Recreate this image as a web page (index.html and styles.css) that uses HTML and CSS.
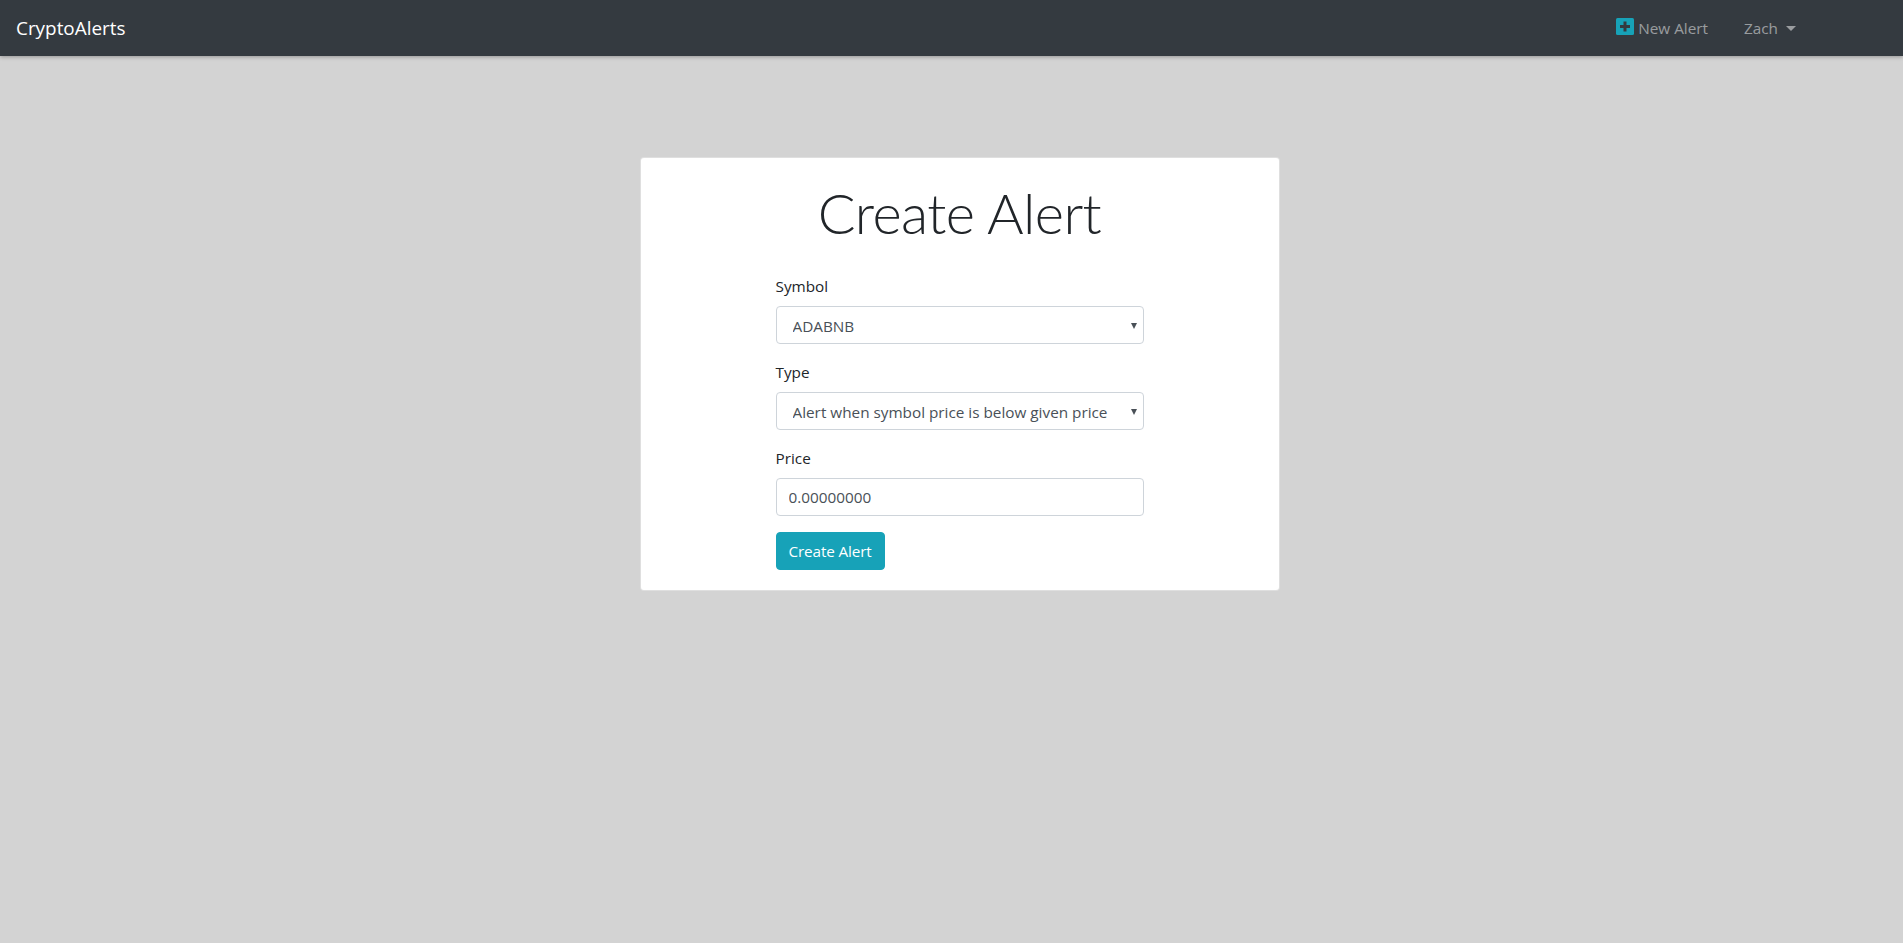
FILE: index.html
```html
<!DOCTYPE html>
<html lang="en">
<head>
    <meta charset="UTF-8">
    <meta name="viewport" content="width=device-width, initial-scale=1.0">
    <title>CryptoAlerts</title>
    <link rel="stylesheet" href="styles.css">
</head>
<body>
    <nav class="navbar">
        <a class="brand" href="#">CryptoAlerts</a>
        <div class="nav-links">
            <a class="nav-link new-alert" href="#">
                <svg class="plus-icon" viewBox="0 0 18 17" width="18" height="17" aria-hidden="true">
                    <rect width="18" height="17" rx="1.5" fill="#17a2b8"/>
                    <path d="M7.5 3.5h3v3.5H14v3h-3.5v3.5h-3V10H4V7h3.5z" fill="#343a40"/>
                </svg>
                New Alert
            </a>
            <a class="nav-link dropdown-toggle" href="#">Zach</a>
        </div>
    </nav>

    <main class="content">
        <div class="card">
            <h1>Create Alert</h1>
            <form class="alert-form">
                <div class="form-group">
                    <label for="symbol">Symbol</label>
                    <div class="select-wrap">
                        <select id="symbol" class="form-control select-control">
                            <option>ADABNB</option>
                        </select>
                    </div>
                </div>
                <div class="form-group">
                    <label for="type">Type</label>
                    <div class="select-wrap">
                        <select id="type" class="form-control select-control">
                            <option>Alert when symbol price is below given price</option>
                        </select>
                    </div>
                </div>
                <div class="form-group">
                    <label for="price">Price</label>
                    <input id="price" class="form-control" type="text" value="0.00000000">
                </div>
                <button type="button" class="btn-info">Create Alert</button>
            </form>
        </div>
    </main>
</body>
</html>
```

FILE: styles.css
```css
* {
    box-sizing: border-box;
}
body {
    font-family: "Open Sans", "Noto Sans", sans-serif;
    margin: 0;
    min-height: 943px;
    background-color: #d3d3d3;
    color: #212529;
    font-size: 15.3px;
    line-height: 1.5;
}
a {
    text-decoration: none;
}
.navbar {
    display: flex;
    align-items: center;
    justify-content: space-between;
    height: 56px;
    padding: 0 16px;
    background-color: #343a40;
    box-shadow: 0 1px 4px rgba(0, 0, 0, 0.3);
}
.brand {
    padding-top: 1px;
    color: #ffffff;
    font-size: 18.9px;
}
.nav-links {
    display: flex;
    align-items: center;
    gap: 36px;
    margin-right: 91px;
}
.nav-link {
    display: flex;
    align-items: center;
    color: rgba(255, 255, 255, 0.5);
}
.plus-icon {
    margin-right: 4px;
    margin-top: -4px;
}
.dropdown-toggle::after {
    content: "";
    margin-left: 8px;
    border-top: 5px solid;
    border-left: 5px solid transparent;
    border-right: 5px solid transparent;
}
.content {
    display: flex;
    justify-content: center;
    padding: 101px 0 0 16px;
}
.card {
    width: 640px;
    padding: 21px 135px 20px;
    background-color: #ffffff;
    border: 1px solid rgba(0, 0, 0, 0.125);
    border-radius: 4px;
}
h1 {
    margin: 0 0 28px;
    text-align: center;
    font-family: Lato, "Open Sans", sans-serif;
    font-weight: 300;
    font-size: 56px;
    line-height: 67px;
    letter-spacing: -0.6px;
    color: #212529;
}
.form-group {
    margin-bottom: 16px;
}
label {
    display: block;
    margin-bottom: 8px;
    line-height: 24px;
}
.form-control {
    display: block;
    width: 100%;
    height: 38px;
    padding: 6px 12px;
    font-family: inherit;
    font-size: 15.3px;
    color: #495057;
    background-color: #ffffff;
    border: 1px solid #ced4da;
    border-radius: 4px;
}
.select-wrap {
    position: relative;
}
.select-wrap::after {
    content: "";
    position: absolute;
    top: 17px;
    right: 7px;
    border-top: 6px solid #495057;
    border-left: 3px solid transparent;
    border-right: 3px solid transparent;
    pointer-events: none;
}
.select-control {
    appearance: none;
    padding: 7px 12px 5px 16px;
}
.btn-info {
    display: block;
    height: 38px;
    padding: 6px 12px;
    font-family: inherit;
    font-size: 15.3px;
    letter-spacing: -0.14px;
    color: #ffffff;
    background-color: #17a2b8;
    border: 1px solid #17a2b8;
    border-radius: 4px;
    cursor: pointer;
}
```
